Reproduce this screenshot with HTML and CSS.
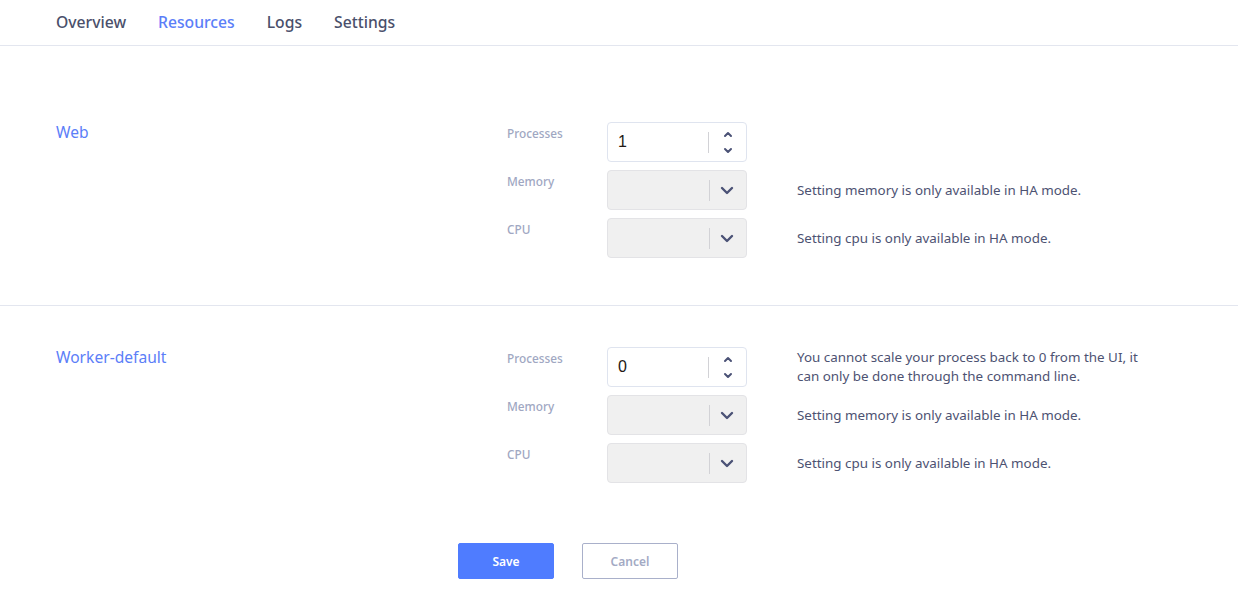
FILE: index.html
```html
<!DOCTYPE html>
<html lang="en">
<head>
<meta charset="utf-8">
<title>Resources</title>
<link rel="stylesheet" href="styles.css">
</head>
<body>
<nav class="tabs">
  <a class="tab">Overview</a>
  <a class="tab active">Resources</a>
  <a class="tab">Logs</a>
  <a class="tab">Settings</a>
</nav>
<main class="content">
  <section class="proc">
    <h2 class="proc-name">Web</h2>
    <div class="fields">
      <label class="label">Processes</label>
      <div class="control number">
        <span class="value">1</span>
        <span class="sep"></span>
        <span class="stepper">
          <svg width="10" height="7" viewBox="0 0 10 7"><path d="M2 5 L5 2 L8 5" fill="none" stroke="#4b5276" stroke-width="2" stroke-linecap="round" stroke-linejoin="round"/></svg>
          <svg width="10" height="7" viewBox="0 0 10 7"><path d="M2 2 L5 5 L8 2" fill="none" stroke="#4b5276" stroke-width="2" stroke-linecap="round" stroke-linejoin="round"/></svg>
        </span>
      </div>
      <p class="help"></p>

      <label class="label">Memory</label>
      <div class="control select">
        <span class="sep"></span>
        <svg class="chev" width="14" height="9" viewBox="0 0 14 9"><path d="M2 2 L7 7 L12 2" fill="none" stroke="#4b5276" stroke-width="2.4" stroke-linecap="round" stroke-linejoin="round"/></svg>
      </div>
      <p class="help">Setting memory is only available in HA mode.</p>

      <label class="label">CPU</label>
      <div class="control select">
        <span class="sep"></span>
        <svg class="chev" width="14" height="9" viewBox="0 0 14 9"><path d="M2 2 L7 7 L12 2" fill="none" stroke="#4b5276" stroke-width="2.4" stroke-linecap="round" stroke-linejoin="round"/></svg>
      </div>
      <p class="help">Setting cpu is only available in HA mode.</p>
    </div>
  </section>

  <section class="proc">
    <h2 class="proc-name">Worker-default</h2>
    <div class="fields">
      <label class="label">Processes</label>
      <div class="control number">
        <span class="value">0</span>
        <span class="sep"></span>
        <span class="stepper">
          <svg width="10" height="7" viewBox="0 0 10 7"><path d="M2 5 L5 2 L8 5" fill="none" stroke="#4b5276" stroke-width="2" stroke-linecap="round" stroke-linejoin="round"/></svg>
          <svg width="10" height="7" viewBox="0 0 10 7"><path d="M2 2 L5 5 L8 2" fill="none" stroke="#4b5276" stroke-width="2" stroke-linecap="round" stroke-linejoin="round"/></svg>
        </span>
      </div>
      <p class="help">You cannot scale your process back to 0 from the UI, it can only be done through the command line.</p>

      <label class="label">Memory</label>
      <div class="control select">
        <span class="sep"></span>
        <svg class="chev" width="14" height="9" viewBox="0 0 14 9"><path d="M2 2 L7 7 L12 2" fill="none" stroke="#4b5276" stroke-width="2.4" stroke-linecap="round" stroke-linejoin="round"/></svg>
      </div>
      <p class="help">Setting memory is only available in HA mode.</p>

      <label class="label">CPU</label>
      <div class="control select">
        <span class="sep"></span>
        <svg class="chev" width="14" height="9" viewBox="0 0 14 9"><path d="M2 2 L7 7 L12 2" fill="none" stroke="#4b5276" stroke-width="2.4" stroke-linecap="round" stroke-linejoin="round"/></svg>
      </div>
      <p class="help">Setting cpu is only available in HA mode.</p>
    </div>
  </section>

  <div class="actions">
    <button class="btn btn-primary">Save</button>
    <button class="btn btn-outline">Cancel</button>
  </div>
</main>
</body>
</html>
```
FILE: styles.css
```css
* { box-sizing: border-box; }
html, body { margin: 0; padding: 0; background: #fff; }
body {
  font-family: "Noto Sans", "Open Sans", sans-serif;
  color: #4c5170;
  width: 1238px;
}
.tabs {
  display: flex;
  gap: 32px;
  height: 46px;
  padding-left: 56px;
  border-bottom: 1px solid #e3e6ef;
  align-items: center;
  padding-bottom: 2px;
}
.tab {
  font-size: 15.7px;
  font-weight: 500;
  color: #4a4f6b;
  cursor: pointer;
}
.tab.active { color: #5b7ef8; }

.content { padding-top: 35px; }
.proc {
  display: flex;
  padding: 41px 0 47px 56px;
}
.proc + .proc { border-top: 1px solid #e3e6ef; }
.proc-name {
  width: 451px;
  margin: 0;
  font-size: 15.6px;
  font-weight: 400;
  color: #5b7ef8;
  line-height: 20px;
}
.fields {
  display: grid;
  grid-template-columns: 100px 140px 370px;
  column-gap: 0;
  row-gap: 8px;
}
.label {
  font-size: 11.8px;
  font-weight: 500;
  color: #a0a7c2;
  padding-top: 4px;
  line-height: 14px;
}
.control {
  height: 40px;
  border-radius: 4px;
  display: flex;
  align-items: center;
}
.number {
  border: 1px solid #dfe4ef;
  background: #fff;
}
.select {
  border: 1px solid #e3e3e6;
  background: #f0f0f0;
  justify-content: flex-end;
}
.value {
  flex: 1;
  padding-left: 10px;
  font-family: "Liberation Sans", Arial, sans-serif;
  font-size: 16px;
  color: #231a14;
}
.sep {
  width: 1px;
  height: 21px;
  background: #d2d2d6;
}
.stepper {
  width: 37px;
  display: flex;
  flex-direction: column;
  align-items: center;
  gap: 9px;
}
.chev { margin: 0 12px 0 10px; }
.help {
  margin: 0 0 0 50px;
  font-size: 13.4px;
  line-height: 19px;
  color: #4d5272;
  align-self: center;
  width: 350px;
}
.actions {
  display: flex;
  gap: 28px;
  padding: 13px 0 0 458px;
}
.btn {
  width: 96px;
  height: 36px;
  border-radius: 2px;
  font-family: inherit;
  font-size: 12px;
  font-weight: 600;
  cursor: pointer;
}
.btn-primary {
  background: #4f7cff;
  border: 1px solid #4f7cff;
  color: #fff;
}
.btn-outline {
  background: #fff;
  border: 1px solid #a9b0ca;
  color: #a3aac4;
}
```
